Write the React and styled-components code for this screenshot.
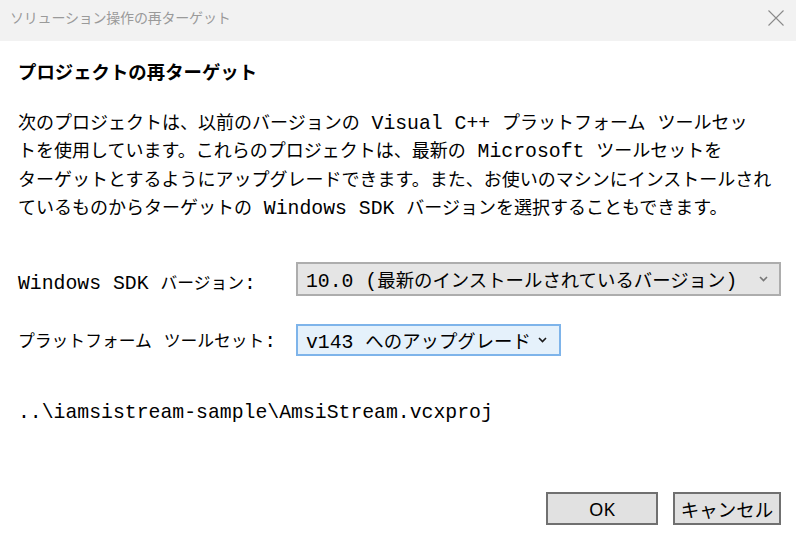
import React from "react";
import styled, { createGlobalStyle } from "styled-components";

const Global = createGlobalStyle`
  html, body { margin: 0; padding: 0; background: #ffffff; }
  body { width: 796px; height: 540px; overflow: hidden; }
`;

const JP = `"Noto Sans CJK JP", "Noto Sans", sans-serif`;
const MONO = `"Liberation Mono", "Noto Sans CJK JP", monospace`;

const Dialog = styled.div`
  width: 796px;
  height: 540px;
  display: flex;
  flex-direction: column;
  background: #ffffff;
  font-family: ${JP};
  color: #000;
`;

const TitleBar = styled.div`
  height: 41px;
  flex: none;
  display: flex;
  align-items: center;
  justify-content: space-between;
  background: #f2f2f2;
  padding: 0 12px 0 10px;
`;

const TitleText = styled.span`
  font-size: 14px;
  color: #9a9a9a;
  letter-spacing: -0.2px;
  margin-top: -7px;
`;

const CloseButton = styled.div`
  width: 16px;
  height: 16px;
  display: flex;
  align-items: center;
  justify-content: center;
  margin-top: -6px;
`;

const Body = styled.div`
  flex: 1;
  display: flex;
  flex-direction: column;
  padding: 0 15px 0 18px;
`;

const Heading = styled.h1`
  margin: 16px 0 0;
  font-size: 18.4px;
  font-weight: 700;
  line-height: 28px;
`;

const Paragraph = styled.div`
  margin-top: 22px;
  font-size: 18px;
  display: flex;
  flex-direction: column;
`;

const Line = styled.div`
  white-space: nowrap;
  height: 28.3px;
  line-height: 28px;
`;

const Code = styled.span`
  font-family: ${MONO};
  font-size: 19.8px;
  line-height: 1;
`;

const FieldGrid = styled.div`
  margin-top: 42px;
  display: grid;
  grid-template-columns: 278px 1fr;
  row-gap: 28px;
  align-items: center;
`;

const Label = styled.div`
  font-size: 16.8px;
  white-space: nowrap;
  line-height: 28px;
  height: 28px;
  margin-top: ${(p) => (p.$nudge ? "5px" : "0")};
`;

const Select = styled.div`
  box-sizing: border-box;
  height: ${(p) => (p.$focused ? 32 : 34)}px;
  width: ${(p) => (p.$width ? `${p.$width}px` : "auto")};
  justify-self: start;
  display: flex;
  align-items: center;
  justify-content: space-between;
  padding: 0 ${(p) => (p.$focused ? 12 : 11)}px 0 8px;
  border: 2px solid ${(p) => (p.$focused ? "#7eb4ea" : "#adadad")};
  background: ${(p) => (p.$focused ? "#e5f1fb" : "#e5e5e5")};
  font-size: 18.4px;
  white-space: nowrap;
`;

const Chevron = ({ color }) => (
  <svg width="9" height="6" viewBox="0 0 9 6">
    <path d="M1 1 L4.5 4.5 L8 1" fill="none" stroke={color} strokeWidth="1.6" />
  </svg>
);

const PathText = styled.div`
  margin-top: 43px;
  font-family: ${MONO};
  font-size: 19.8px;
  line-height: 28px;
`;

const Footer = styled.div`
  margin-top: 65px;
  display: flex;
  justify-content: flex-end;
  gap: 15px;
`;

const Button = styled.button`
  box-sizing: border-box;
  width: ${(p) => p.$width}px;
  height: 33px;
  border: 2px solid #707070;
  background: #e1e1e1;
  color: #000;
  font-family: "Noto Sans", ${JP};
  font-size: 18.5px;
  padding: 0;
  display: flex;
  align-items: center;
  justify-content: center;
`;

export default function App() {
  return (
    <>
      <Global />
      <Dialog>
        <TitleBar>
          <TitleText>ソリューション操作の再ターゲット</TitleText>
          <CloseButton>
            <svg width="16" height="16" viewBox="0 0 16 16">
              <path d="M0.5 0.5 L15.5 15.5 M15.5 0.5 L0.5 15.5" stroke="#8a8a8a" strokeWidth="1.1" fill="none" />
            </svg>
          </CloseButton>
        </TitleBar>
        <Body>
          <Heading>プロジェクトの再ターゲット</Heading>
          <Paragraph>
            <Line>
              次のプロジェクトは、以前のバージョンの<Code> Visual C++ </Code>プラットフォーム<Code> </Code>ツールセッ
            </Line>
            <Line>
              トを使用しています。これらのプロジェクトは、最新の<Code> Microsoft </Code>ツールセットを
            </Line>
            <Line>ターゲットとするようにアップグレードできます。また、お使いのマシンにインストールされ</Line>
            <Line>
              ているものからターゲットの<Code> Windows SDK </Code>バージョンを選択することもできます。
            </Line>
          </Paragraph>
          <FieldGrid>
            <Label $nudge>
              <Code>Windows SDK </Code>バージョン<Code>:</Code>
            </Label>
            <Select $width={485}>
              <span>
                <Code>10.0 (</Code>最新のインストールされているバージョン<Code>)</Code>
              </span>
              <Chevron color="#777777" />
            </Select>
            <Label>
              プラットフォーム<Code> </Code>ツールセット<Code>:</Code>
            </Label>
            <Select $width={265} $focused>
              <span>
                <Code>v143 </Code>へのアップグレード
              </span>
              <Chevron color="#1a1a1a" />
            </Select>
          </FieldGrid>
          <PathText>..\iamsistream-sample\AmsiStream.vcxproj</PathText>
          <Footer>
            <Button $width={112}>OK</Button>
            <Button $width={108}>キャンセル</Button>
          </Footer>
        </Body>
      </Dialog>
    </>
  );
}
